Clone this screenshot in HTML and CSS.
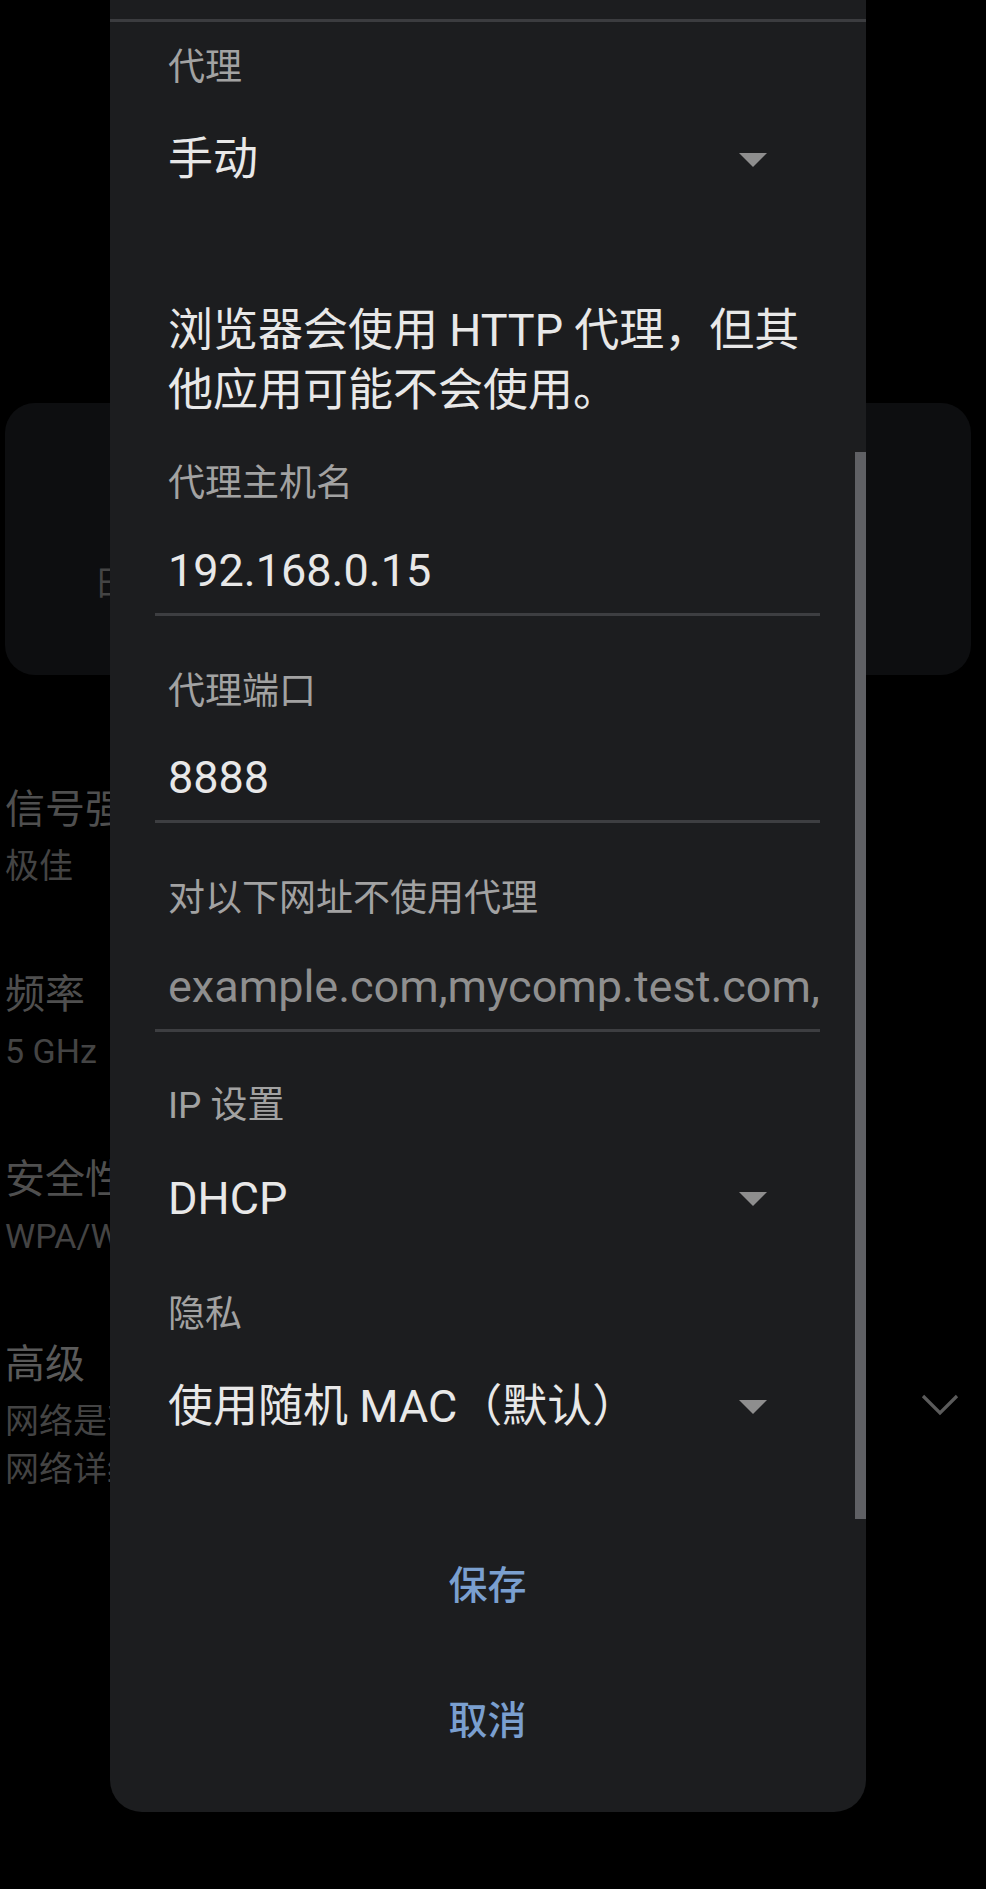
FILE: index.html
```html
<!DOCTYPE html>
<html lang="zh-CN">
<head>
<meta charset="utf-8">
<title>代理设置</title>
<link rel="stylesheet" href="styles.css">
</head>
<body>
<div class="screen">
  <div class="bg">
    <div class="card"><span class="card-text">日</span></div>
    <div class="list">
      <div class="item">
        <div class="item-text">
          <div class="title">信号强度</div>
          <div class="sub">极佳</div>
        </div>
      </div>
      <div class="item">
        <div class="item-text">
          <div class="title">频率</div>
          <div class="sub">5 GHz</div>
        </div>
      </div>
      <div class="item">
        <div class="item-text">
          <div class="title">安全性</div>
          <div class="sub">WPA/WPA</div>
        </div>
      </div>
      <div class="item">
        <div class="item-text">
          <div class="title title-adv">高级</div>
          <div class="sub">网络是否</div>
          <div class="sub">网络详细</div>
        </div>
        <svg class="chevron" width="38" height="22" viewBox="0 0 38 22"><polyline points="2,2 19,19 36,2" fill="none" stroke="#5b5b5b" stroke-width="3.2"/></svg>
      </div>
    </div>
  </div>

  <div class="dialog">
    <div class="dialog-top"></div>
    <div class="divider"></div>

    <div class="field-label first">代理</div>
    <div class="spinner sp-proxy">
      <span class="spinner-value">手动</span>
      <span class="tri"></span>
    </div>

    <p class="note">浏览器会使用 HTTP 代理，但其他应用可能不会使用。</p>

    <div class="field-label lab-host">代理主机名</div>
    <div class="input in-host"><span class="input-value">192.168.0.15</span></div>

    <div class="field-label lab-gap">代理端口</div>
    <div class="input in-port"><span class="input-value">8888</span></div>

    <div class="field-label lab-gap">对以下网址不使用代理</div>
    <div class="input in-bypass"><span class="input-value placeholder">example.com,mycomp.test.com,</span></div>

    <div class="field-label lab-ip">IP 设置</div>
    <div class="spinner sp-ip">
      <span class="spinner-value">DHCP</span>
      <span class="tri"></span>
    </div>

    <div class="field-label lab-privacy">隐私</div>
    <div class="spinner sp-privacy">
      <span class="spinner-value">使用随机 MAC（默认）</span>
      <span class="tri"></span>
    </div>

    <div class="actions">
      <div class="btn">保存</div>
      <div class="btn">取消</div>
    </div>

    <div class="scrollbar"></div>
  </div>
</div>
</body>
</html>
```

FILE: styles.css
```css
* { box-sizing: border-box; }

html, body {
  margin: 0;
  padding: 0;
  background: #000;
}

body {
  width: 986px;
  height: 1889px;
  overflow: hidden;
  font-family: Roboto, "Noto Sans CJK SC", "Noto Sans", sans-serif;
}

.screen {
  position: relative;
  width: 986px;
  height: 1889px;
  background: #000;
}

/* ---------- dimmed page behind the dialog ---------- */
.bg {
  padding-top: 403px;
}

.card {
  margin: 0 15px 0 5px;
  height: 272px;
  background: #0d0e10;
  border-radius: 30px;
  padding: 157px 0 0 89px;
}

.card-text {
  display: block;
  font-size: 34px;
  line-height: 46px;
  color: #444;
}

.list {
  margin-top: 107px;
  padding: 0 27px 0 5px;
  display: flex;
  flex-direction: column;
  gap: 77px;
}

.item {
  display: flex;
  align-items: center;
  justify-content: space-between;
}

.title {
  font-size: 40px;
  line-height: 56px;
  color: #4f4f4f;
}

.title-adv {
  color: #5a5a5a;
}

.sub {
  font-size: 34px;
  line-height: 48px;
  color: #444;
}

.item-text .title + .sub { margin-top: 4px; }

.chevron {
  display: block;
  margin-bottom: 20px;
}

/* ---------- dialog ---------- */
.dialog {
  position: absolute;
  left: 110px;
  top: 0;
  width: 756px;
  height: 1812px;
  background: #1c1d1f;
  border-radius: 0 0 32px 32px;
  padding: 0 46px 25px 45px;
}

.dialog-top {
  height: 19px;
}

.divider {
  height: 3px;
  margin: 0 -46px 0 -45px;
  background: #3b3c3f;
}

.field-label {
  padding: 3px 0 0 13px;
  font-size: 37px;
  line-height: 44px;
  color: #a2a2a2;
}

.field-label.first { margin-top: 21px; }
.field-label.lab-host { margin-top: 38px; }
.field-label.lab-gap { margin-top: 51px; }
.field-label.lab-ip { margin-top: 49px; }
.field-label.lab-privacy { margin-top: 64px; }

.spinner {
  display: flex;
  align-items: center;
  justify-content: space-between;
  height: 57px;
  padding: 3px 53px 0 13px;
}

.sp-proxy { margin-top: 40px; }
.sp-ip { margin-top: 41px; }
.sp-privacy { margin-top: 40px; }

.spinner-value {
  font-size: 45px;
  line-height: 54px;
  color: #e8e8e8;
  white-space: nowrap;
}

.tri {
  width: 0;
  height: 0;
  border-left: 14px solid transparent;
  border-right: 14px solid transparent;
  border-top: 14px solid #8e8e8e;
  margin-top: -1px;
}

.note {
  margin: 111px 0 0 0;
  padding: 3px 0 0 13px;
  font-size: 45px;
  line-height: 60px;
  color: #e8e8e8;
}

.input {
  padding: 0 0 15px 13px;
  border-bottom: 3px solid #3d3e41;
}

.in-host { margin-top: 35px; }
.in-port { margin-top: 34px; }
.in-bypass { margin-top: 36px; }

.input-value {
  display: block;
  padding-top: 3px;
  font-size: 45px;
  line-height: 54px;
  color: #e8e8e8;
  white-space: nowrap;
  overflow: hidden;
}

.input-value.placeholder {
  color: #8f8f8f;
}

.actions {
  margin-top: 80px;
  display: flex;
  flex-direction: column;
}

.btn {
  height: 135px;
  display: flex;
  align-items: center;
  justify-content: center;
  font-size: 39px;
  font-weight: 500;
  color: #7a9fcf;
}

.scrollbar {
  position: absolute;
  right: 0;
  top: 452px;
  width: 11px;
  height: 1067px;
  background: #5f6064;
}
```
